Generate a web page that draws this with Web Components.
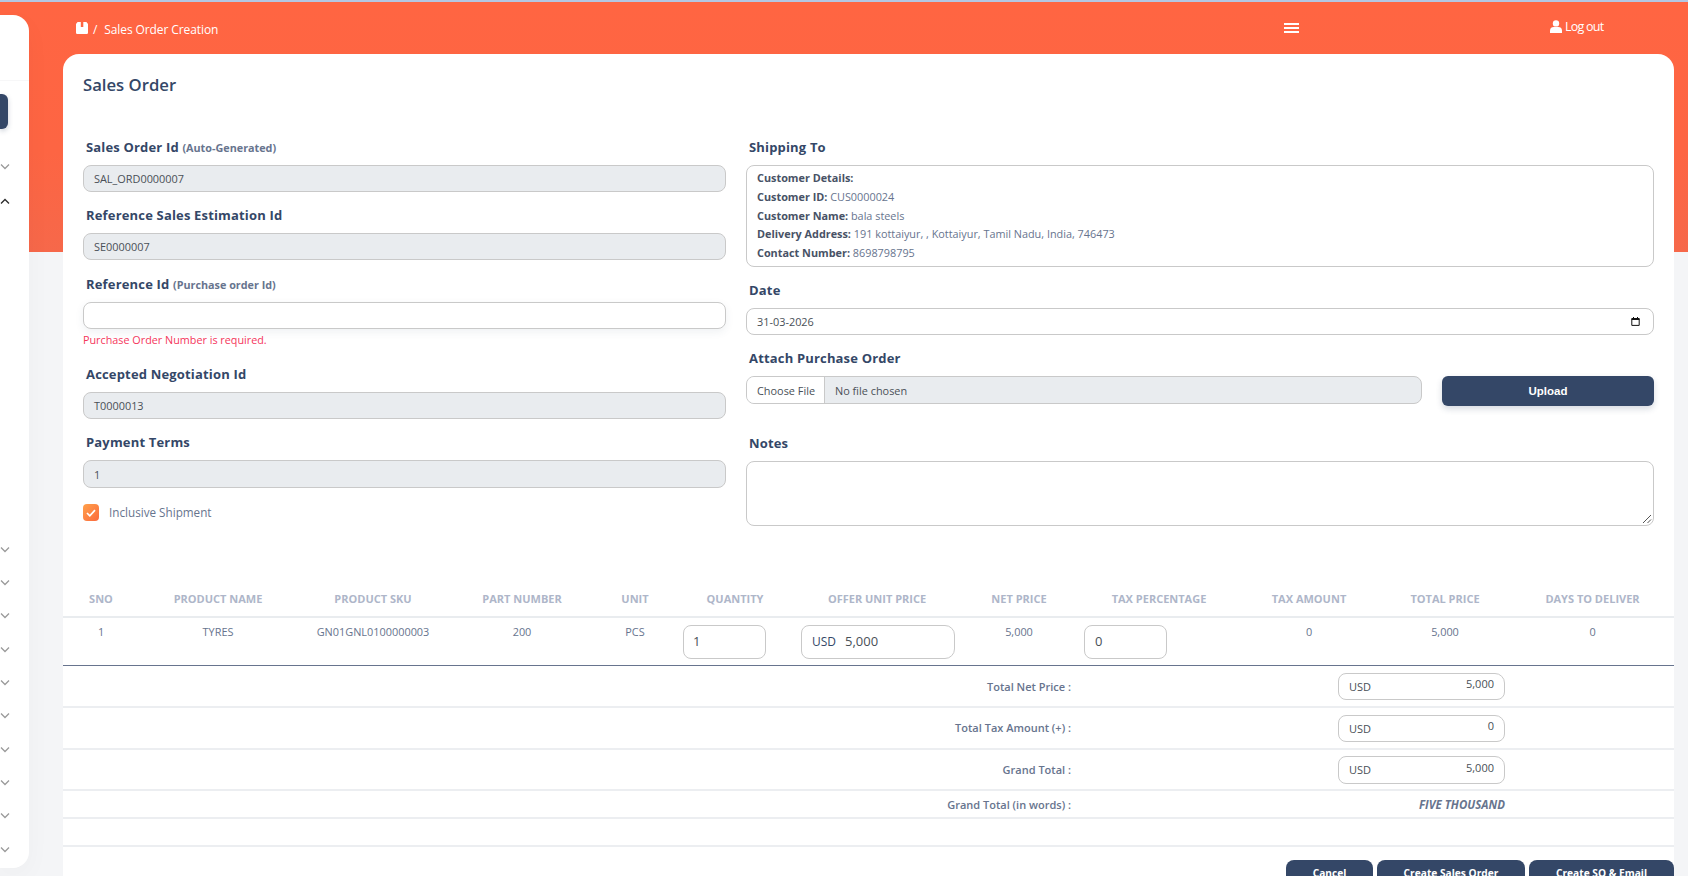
<!DOCTYPE html>
<html lang="en"><head><meta charset="utf-8"><title>Sales Order</title>
<style>
html,body{margin:0;height:876px;overflow:hidden;background:#f4f5f7;}
body{font-family:"Open Sans","Noto Sans",sans-serif;color:#67748e;}
so-address b{color:#485266;}
</style></head>
<body>
<so-app>
  <so-sidebar slot="side"></so-sidebar>
  <so-topbar slot="top"></so-topbar>
  <so-card slot="main">
    <span slot="title">Sales Order</span>
    <so-col slot="left">
      <so-field label="Sales Order Id" sub="(Auto-Generated)"><so-input disabled h="27">SAL_ORD0000007</so-input></so-field>
      <so-field label="Reference Sales Estimation Id" gap="14"><so-input disabled h="27">SE0000007</so-input></so-field>
      <so-field label="Reference Id" sub="(Purchase order Id)" error="Purchase Order Number is required."><so-input h="27" shadow></so-input></so-field>
      <so-field label="Accepted Negotiation Id"><so-input disabled h="27">T0000013</so-input></so-field>
      <so-field label="Payment Terms"><so-input disabled h="28">1</so-input></so-field>
      <so-check>Inclusive Shipment</so-check>
    </so-col>
    <so-col slot="right">
      <so-field label="Shipping To">
        <so-address>
          <div><b>Customer Details:</b></div>
          <div><b>Customer ID:</b> CUS0000024</div>
          <div><b>Customer Name:</b> bala steels</div>
          <div><b>Delivery Address:</b> 191 kottaiyur, , Kottaiyur, Tamil Nadu, India, 746473</div>
          <div><b>Contact Number:</b> 8698798795</div>
        </so-address>
      </so-field>
      <so-field label="Date"><so-input h="27" date>31-03-2026</so-input></so-field>
      <so-field label="Attach Purchase Order" gap="27"><so-upload></so-upload></so-field>
      <so-field label="Notes"><so-input h="65" resize></so-input></so-field>
    </so-col>
    <so-items slot="table"></so-items>
    <so-totals slot="totals"></so-totals>
    <so-actions slot="actions"></so-actions>
  </so-card>
</so-app>
<script>
function reg(name, css, html, init){
  customElements.define(name, class extends HTMLElement{
    constructor(){super();this.attachShadow({mode:'open'});}
    connectedCallback(){
      this.shadowRoot.innerHTML='<style>'+css+'</style>'+(typeof html==='function'?html(this):html);
      if(init)init(this);
    }
  });
}
const chevron=(up,c)=>`<svg width="10" height="7" viewBox="0 0 10 7"><path d="${up?'M1 5.5 5 1.5 9 5.5':'M1 1.5 5 5.5 9 1.5'}" fill="none" stroke="${c}" stroke-width="1.3"/></svg>`;

reg('so-app',`
  :host{display:grid;grid-template-columns:29px 1fr;column-gap:34px;height:874px;overflow:hidden;border-top:2px solid #b4c7e3;
    background:linear-gradient(#ff6542 0,#fd6543 150px,#f6684a 250px,#f4f5f7 250px);padding-right:14px;}
  .main{display:flex;flex-direction:column;min-width:0;}
`,`<slot name="side"></slot><div class="main"><slot name="top"></slot><slot name="main"></slot></div>`);

reg('so-sidebar',`
  :host{display:flex;flex-direction:column;background:#fff;margin-top:13px;height:853px;border-radius:0 16px 16px 0;overflow:hidden;box-shadow:0 8px 26px rgba(0,0,0,.03);}
  hr{border:0;border-top:1px solid #f7f7f8;margin:65px 0 13px;width:100%;}
  .btn{width:8px;height:35px;background:#344767;border-radius:0 6px 6px 0;flex:none;margin-bottom:21px;box-shadow:0 2px 5px rgba(52,71,103,.25);}
  .row{height:33.33px;display:flex;align-items:center;flex:none;}
  .up{margin-top:2px}
  .low{margin-top:314px}
  svg{display:block}
`,()=>{
  let h=`<hr><div class="btn"></div><div class="row">${chevron(false,'#9a9a9a')}</div><div class="row up">${chevron(true,'#2b2b2b')}</div>`;
  for(let i=0;i<10;i++)h+=`<div class="row ${i?'':'low'}">${chevron(false,'#9a9a9a')}</div>`;
  return h;
});

reg('so-topbar',`
  :host{display:flex;height:52px;color:#fff;font-size:12px;flex:none;}
  .crumb{width:1221px;padding-left:13px;padding-top:17px;box-sizing:border-box;display:flex;align-items:center;height:35px;letter-spacing:-.1px;}
  .sep{margin:2px 7px 0 5px;}
  .txt{margin-top:2px;}
  .burger{width:15px;height:10px;margin-top:21px;display:flex;flex-direction:column;justify-content:space-between;}
  .burger i{display:block;height:2px;background:#fff;}
  .out{margin-left:251px;display:flex;align-items:center;height:18px;margin-top:15px;letter-spacing:-.75px;font-size:12.5px;}
  svg{display:block;flex:none}
`,`<div class="crumb"><svg width="12" height="12" viewBox="0 0 12 12"><path fill="#fff" d="M1.6 0H4.8V5H7.3V0H10.4L11.6 1.6A1 1 0 0 1 12 2.4V10.8A1.2 1.2 0 0 1 10.8 12H1.2A1.2 1.2 0 0 1 0 10.8V2.4A1 1 0 0 1 .4 1.6Z"/></svg><span class="sep">/</span><span class="txt">Sales Order Creation</span></div>
<div class="burger"><i></i><i></i><i></i></div>
<div class="out"><svg width="12" height="13" viewBox="0 0 12 13" style="margin-right:3px"><circle cx="6" cy="3.4" r="3.2" fill="#fff"/><path fill="#fff" d="M0 13V10.4C0 8.2 1.8 7 3.6 7H8.4C10.2 7 12 8.2 12 10.4V13Z"/></svg><span>Log out</span></div>`);

reg('so-card',`
  :host{display:block;background:#fff;border-radius:16px 16px 0 0;height:822px;overflow:hidden;flex:none;}
  .title{padding:18px 20px 0;font-size:16.7px;line-height:25px;font-weight:600;color:#344767;height:25px;margin-bottom:40px;}
  .form{display:grid;grid-template-columns:643px 908px;column-gap:20px;padding:0 20px;height:443px;}
`,`<div class="title"><slot name="title"></slot></div>
<div class="form"><slot name="left"></slot><slot name="right"></slot></div>
<slot name="table"></slot><slot name="totals"></slot><slot name="actions"></slot>`);

reg('so-col',`:host{display:flex;flex-direction:column;}`,`<slot></slot>`);

reg('so-field',`
  :host{display:block;margin-bottom:13px;}
  label{display:block;height:20px;line-height:20px;padding-left:3px;margin-bottom:8px;font-size:13px;font-weight:700;color:#344767;letter-spacing:.17px;white-space:nowrap;}
  small{font-size:10.8px;color:#67748e;font-weight:700;letter-spacing:0;}
  .err{font-size:10.8px;line-height:16px;color:#f5365c;margin-top:3px;height:19px;}
`,el=>`<label>${el.getAttribute('label')}${el.hasAttribute('sub')?' <small>'+el.getAttribute('sub')+'</small>':''}</label><slot></slot>${el.hasAttribute('error')?'<div class="err">'+el.getAttribute('error')+'</div>':''}`,
el=>{if(el.hasAttribute('gap'))el.style.marginBottom=el.getAttribute('gap')+'px';});

reg('so-input',`
  :host{display:flex;align-items:center;box-sizing:border-box;width:100%;border:1px solid #c9c9c9;border-radius:8px;padding:0 9px 0 10px;font-size:10.9px;color:#495057;background:#fff;position:relative;}
  :host([disabled]){background:#e9ecef;}
  :host([shadow]){box-shadow:0 3px 8px rgba(52,71,103,.08);}
  .text{flex:1;}
  svg{display:block;flex:none}
  .cal{margin-right:4px}
  .grip{position:absolute;right:1px;bottom:1px;}
`,el=>`<div class="text"><slot></slot></div>${el.hasAttribute('date')?'<svg class="cal" width="9" height="9" viewBox="0 0 9 9"><path fill="none" stroke="#111" stroke-width="1" d="M.8 2.2H8.2V8.4H.8Z"/><path fill="#111" d="M.5 1H8.5V3H.5Z"/><path fill="#111" d="M2 0H3V1.5H2ZM6 0H7V1.5H6Z"/></svg>':''}${el.hasAttribute('resize')?'<svg class="grip" width="10" height="10" viewBox="0 0 10 10"><path fill="none" stroke="#555" stroke-width="1" d="M1 9 9 1M5.5 9 9 5.5"/></svg>':''}`,
el=>{el.style.height=el.getAttribute('h')+'px';});

reg('so-address',`
  :host{display:block;box-sizing:border-box;height:102px;border:1px solid #c9c9c9;border-radius:8px;padding:3px 10px;font-size:10.85px;line-height:18.75px;color:#67748e;}
  ::slotted(div){white-space:nowrap;}
`,`<slot></slot>`);

reg('so-check',`
  :host{display:flex;align-items:center;font-size:11.7px;color:#67748e;margin-top:3px;height:17px;}
  .box{width:16px;height:17px;border-radius:4px;background:linear-gradient(135deg,#ffa14a,#fb6a3e);margin-right:10px;display:flex;align-items:center;justify-content:center;flex:none;}
  .t{margin-top:-2px;}
`,`<span class="box"><svg width="10" height="8" viewBox="0 0 10 8"><path d="M1 4 3.8 6.8 9 1.2" fill="none" stroke="#fff" stroke-width="1.7"/></svg></span><span class="t"><slot></slot></span>`);

reg('so-upload',`
  :host{display:flex;gap:20px;align-items:flex-start;}
  .file{flex:1;height:28px;box-sizing:border-box;border:1px solid #c9c9c9;border-radius:8px;background:#e9ecef;display:flex;align-items:stretch;font-size:10.9px;color:#67748e;overflow:hidden;line-height:27px;}
  .ch{background:#fff;padding:0 9px 0 10px;border-right:1px solid #c9c9c9;color:#495057;}
  .no{padding-left:10px;color:#495057;}
  button{width:212px;height:30px;border:0;border-radius:6px;background:#344767;color:#fff;font:700 11.5px "Liberation Sans",Arial,sans-serif;box-shadow:0 3px 6px rgba(52,71,103,.2);padding:0;}
`,`<div class="file"><span class="ch">Choose File</span><span class="no">No file chosen</span></div><button>Upload</button>`);

const cols='76px 158px 152px 146px 80px 120px 164px 120px 160px 140px 132px 163px';
reg('so-items',`
  :host{display:block;}
  .tr{display:grid;grid-template-columns:${cols};}
  .head{height:36px;align-items:center;border-bottom:2px solid #e9ecef;box-sizing:content-box;font-size:11px;font-weight:700;color:#aeb6c9;text-align:center;white-space:nowrap;}
  .body{height:47px;border-bottom:1px solid #67748e;font-size:10.9px;color:#67748e;text-align:center;}
  .td{padding-top:5px;line-height:18px;}
  .in{padding-top:7px;text-align:left;}
  .box{display:flex;align-items:center;height:34px;box-sizing:border-box;border:1px solid #c9c9c9;border-radius:8px;padding:0 0 2px 10px;font-size:13px;color:#495057;}
  .w{width:83px;}
  .qty{margin-left:8px;padding-left:9px}.tax{margin-left:5px}
  .off{margin-left:6px;width:154px;border-radius:8px 10px 10px 8px;font-size:13px;}
  .off span{font-size:12px;margin-right:9px;color:#344767;}
`,()=>{
  const heads=['SNO','PRODUCT NAME','PRODUCT SKU','PART NUMBER','UNIT','QUANTITY','OFFER UNIT PRICE','NET PRICE','TAX PERCENTAGE','TAX AMOUNT','TOTAL PRICE','DAYS TO DELIVER'];
  return `<div class="tr head">${heads.map(h=>`<div>${h}</div>`).join('')}</div>
  <div class="tr body">
   <div class="td">1</div><div class="td">TYRES</div><div class="td">GN01GNL0100000003</div><div class="td">200</div><div class="td">PCS</div>
   <div class="in"><div class="box w qty">1</div></div>
   <div class="in"><div class="box off"><span>USD</span>5,000</div></div>
   <div class="td">5,000</div>
   <div class="in"><div class="box w tax">0</div></div>
   <div class="td">0</div><div class="td">5,000</div><div class="td">0</div>
  </div>`;
});

reg('so-totals',`
  :host{display:block;}
  .r{display:grid;grid-template-columns:1008px 267px 167px;align-items:center;box-sizing:border-box;border-bottom:2px solid #eceef1;font-size:11px;font-weight:600;color:#67748e;}
  .l{text-align:right;}
  .b{grid-column:3;display:flex;justify-content:space-between;box-sizing:border-box;height:27px;border:1px solid #c9c9c9;border-radius:8px;border-top-right-radius:10px;padding:0 10px;font-weight:400;color:#495057;align-items:center;}
  .b em{font-style:normal;margin-top:-5px;}
  .w{grid-column:3;text-align:right;font-style:italic;font-weight:700;font-size:11.5px;color:#67748e;}
`,`<div class="r" style="height:42px"><div class="l">Total Net Price :</div><div class="b"><span>USD</span><em>5,000</em></div></div>
<div class="r" style="height:42px"><div class="l" style="margin-top:-2px">Total Tax Amount (+) :</div><div class="b"><span>USD</span><em>0</em></div></div>
<div class="r" style="height:41px"><div class="l">Grand Total :</div><div class="b" style="height:28px"><span>USD</span><em>5,000</em></div></div>
<div class="r" style="height:28px"><div class="l">Grand Total (in words) :</div><div class="w">FIVE THOUSAND</div></div>
<div class="r" style="height:28px"></div>`);

reg('so-actions',`
  :host{display:flex;justify-content:flex-end;gap:4px;margin-top:13px;}
  button{display:block;box-sizing:border-box;height:34px;border:0;border-radius:8px;background:#344767;color:#fff;font:700 10.2px/8px "Open Sans",sans-serif;padding:0 0 9px;}
  span{display:block;height:8px;}
`,`<button style="width:87px"><span>Cancel</span></button><button style="width:148px"><span>Create Sales Order</span></button><button style="width:145px"><span>Create SO &amp; Email</span></button>`);
</script>
</body></html>
